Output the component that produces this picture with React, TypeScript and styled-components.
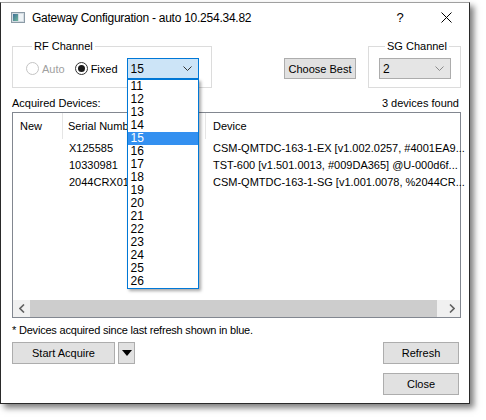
import React from 'react';
import styled, { createGlobalStyle } from 'styled-components';

const GlobalStyle = createGlobalStyle`
  html, body {
    margin: 0;
    padding: 0;
    background: #fff;
  }
  body {
    font-family: 'Liberation Sans', Arial, sans-serif;
    font-size: 11px;
    color: #000;
  }
`;

const Stage = styled.div`
  width: 486px;
  height: 420px;
  padding-top: 2px;
  box-sizing: border-box;
`;

const Window = styled.div`
  width: 470px;
  height: 402px;
  box-sizing: border-box;
  border: 1px solid #2a2a2a;
  border-top-color: #a0a0a0;
  background: #fff;
  box-shadow: 4px 4px 6px rgba(0, 0, 0, 0.5);
  display: flex;
  flex-direction: column;
`;

const TitleBar = styled.div`
  height: 29px;
  display: flex;
  align-items: center;
  padding-left: 10px;
`;

const TitleText = styled.div`
  margin-left: 7px;
  font-size: 12px;
  letter-spacing: -0.25px;
  flex: 1;
`;

const CaptionButton = styled.div`
  width: 46px;
  height: 29px;
  display: flex;
  align-items: center;
  justify-content: center;
  font-size: 13px;
`;

const Content = styled.div`
  flex: 1;
  padding: 0 8px 0 11px;
  display: flex;
  flex-direction: column;
`;

const TopRow = styled.div`
  display: flex;
  align-items: flex-start;
  margin-top: 8px;
`;

const GroupBox = styled.fieldset<{ $width: number; $pl: number }>`
  margin: 0;
  width: ${(p) => p.$width}px;
  min-width: 0;
  box-sizing: border-box;
  padding: 5px 0 8px ${(p) => p.$pl}px;
  border: 1px solid #dcdcdc;
`;

const Legend = styled.legend`
  margin-left: 6px;
  padding: 0 2px;
  line-height: 13px;
  font-size: 11px;
`;

const GroupInner = styled.div`
  display: flex;
  align-items: center;
  height: 21px;
`;

const Radio = styled.div<{ $disabled?: boolean; $mr?: number }>`
  display: flex;
  align-items: center;
  gap: 3px;
  margin-right: ${(p) => p.$mr ?? 0}px;
  color: ${(p) => (p.$disabled ? '#a0a0a0' : '#000')};
`;

const RadioCircle = styled.span<{ $disabled?: boolean }>`
  width: 13px;
  height: 13px;
  box-sizing: border-box;
  border-radius: 50%;
  border: 1px solid ${(p) => (p.$disabled ? '#c4c4c4' : '#333')};
  background: #fff;
  display: flex;
  align-items: center;
  justify-content: center;
`;

const RadioDot = styled.span`
  width: 7px;
  height: 7px;
  border-radius: 50%;
  background: #1a1a1a;
`;

const ComboWrap = styled.div<{ $ml: number }>`
  position: relative;
  margin-left: ${(p) => p.$ml}px;
`;

const Combo = styled.div<{ $focused?: boolean }>`
  width: 72px;
  height: 21px;
  box-sizing: border-box;
  border: 1px solid ${(p) => (p.$focused ? '#0078d7' : '#acacac')};
  background: ${(p) => (p.$focused ? '#cce4f7' : '#e5e5e5')};
  display: flex;
  align-items: center;
  justify-content: space-between;
  padding: 0 6px 0 3px;
  font-size: 12px;
`;

const DropList = styled.div`
  position: absolute;
  top: 100%;
  left: 0;
  width: 72px;
  box-sizing: border-box;
  border: 1px solid #0078d7;
  background: #fff;
  z-index: 10;
  box-shadow: 2px 2px 3px rgba(0, 0, 0, 0.35);
`;

const Option = styled.div<{ $active?: boolean }>`
  height: 13px;
  line-height: 13px;
  font-size: 12px;
  padding-left: 3px;
  background: ${(p) => (p.$active ? '#3390f0' : 'transparent')};
  color: ${(p) => (p.$active ? '#fff' : '#000')};
`;

const Button = styled.button<{ $w: number; $h?: number }>`
  width: ${(p) => p.$w}px;
  height: ${(p) => p.$h ?? 22}px;
  box-sizing: border-box;
  padding: 0;
  border: 1px solid #adadad;
  background: #e1e1e1;
  font-family: 'Liberation Sans', Arial, sans-serif;
  font-size: 11px;
  color: #000;
  display: flex;
  align-items: center;
  justify-content: center;
`;

const ChooseBest = styled(Button)`
  margin: 18px 12px 0 auto;
`;

const InfoRow = styled.div`
  display: flex;
  justify-content: space-between;
  margin-top: 9px;
  line-height: 13px;
  padding-right: 2px;
`;

const ListView = styled.div`
  margin-top: 2px;
  height: 206px;
  box-sizing: border-box;
  border: 1px solid #828790;
  display: flex;
  flex-direction: column;
`;

const GridRow = styled.div<{ $h: number }>`
  display: grid;
  grid-template-columns: 50px 143px 1fr;
  height: ${(p) => p.$h}px;
  align-items: stretch;
  white-space: nowrap;
`;

const HeaderCell = styled.div<{ $pl: number; $last?: boolean }>`
  display: flex;
  align-items: center;
  padding-left: ${(p) => p.$pl}px;
  border-right: ${(p) => (p.$last ? 'none' : '1px solid #e5e5e5')};
`;

const Cell = styled.div<{ $pl: number }>`
  display: flex;
  align-items: center;
  padding-left: ${(p) => p.$pl}px;
`;

const Rows = styled.div`
  flex: 1;
`;

const ScrollBar = styled.div`
  height: 17px;
  display: flex;
  background: #f0f0f0;
`;

const ScrollArrow = styled.div`
  width: 17px;
  display: flex;
  align-items: center;
  justify-content: center;
`;

const Track = styled.div`
  flex: 1;
  display: flex;
`;

const Thumb = styled.div`
  flex: 1;
  margin-right: 6px;
  background: #cdcdcd;
`;

const Note = styled.div`
  margin-top: 6px;
  line-height: 13px;
  letter-spacing: -0.2px;
`;

const ButtonRow = styled.div<{ $mt: number }>`
  display: flex;
  align-items: center;
  margin-top: ${(p) => p.$mt}px;
  padding-right: 2px;
  gap: 3px;
`;

const Spacer = styled.div`
  flex: 1;
`;

const Chevron = ({ color }: { color: string }) => (
  <svg width="9" height="5" viewBox="0 0 9 5">
    <polyline points="0.5,0.5 4.5,4.5 8.5,0.5" fill="none" stroke={color} strokeWidth="1" />
  </svg>
);

const ScrollChevron = ({ dir }: { dir: 'left' | 'right' }) => (
  <svg width="6" height="9" viewBox="0 0 6 9">
    <polyline
      points={dir === 'left' ? '5,0.5 1,4.5 5,8.5' : '1,0.5 5,4.5 1,8.5'}
      fill="none"
      stroke="#606060"
      strokeWidth="1.6"
    />
  </svg>
);

const AppIcon = () => (
  <svg width="14" height="11" viewBox="0 0 14 11">
    <defs>
      <linearGradient id="ig" x1="0" y1="0" x2="1" y2="1">
        <stop offset="0" stopColor="#3f6f98" />
        <stop offset="1" stopColor="#6fb79a" />
      </linearGradient>
    </defs>
    <rect x="0.5" y="0.5" width="13" height="10" fill="#d3dce2" stroke="#8c9ba6" />
    <rect x="2" y="2" width="5" height="7" fill="url(#ig)" />
    <rect x="8" y="2" width="4" height="7" fill="#eef3f6" />
  </svg>
);

const channels = [11, 12, 13, 14, 15, 16, 17, 18, 19, 20, 21, 22, 23, 24, 25, 26];

const devices = [
  { serial: 'X125585', device: 'CSM-QMTDC-163-1-EX [v1.002.0257, #4001EA9...' },
  { serial: '10330981', device: 'TST-600 [v1.501.0013, #009DA365] @U-000d6f...' },
  { serial: '2044CRX01', device: 'CSM-QMTDC-163-1-SG [v1.001.0078, %2044CR...' },
];

const App = () => {
  return (
    <>
      <GlobalStyle />
      <Stage>
        <Window>
          <TitleBar>
            <AppIcon />
            <TitleText>Gateway Configuration - auto 10.254.34.82</TitleText>
            <CaptionButton>?</CaptionButton>
            <CaptionButton>
              <svg width="11" height="11" viewBox="0 0 11 11">
                <path d="M0.5,0.5 L10.5,10.5 M10.5,0.5 L0.5,10.5" stroke="#000" strokeWidth="1" />
              </svg>
            </CaptionButton>
          </TitleBar>
          <Content>
            <TopRow>
              <GroupBox $width={200} $pl={13}>
                <Legend>RF Channel</Legend>
                <GroupInner>
                  <Radio $disabled $mr={10}>
                    <RadioCircle $disabled />
                    Auto
                  </Radio>
                  <Radio>
                    <RadioCircle>
                      <RadioDot />
                    </RadioCircle>
                    Fixed
                  </Radio>
                  <ComboWrap $ml={9}>
                    <Combo $focused>
                      15
                      <Chevron color="#333" />
                    </Combo>
                    <DropList>
                      {channels.map((c) => (
                        <Option key={c} $active={c === 15}>
                          {c}
                        </Option>
                      ))}
                    </DropList>
                  </ComboWrap>
                </GroupInner>
              </GroupBox>
              <ChooseBest $w={72} $h={21}>
                Choose Best
              </ChooseBest>
              <GroupBox $width={93} $pl={10}>
                <Legend>SG Channel</Legend>
                <GroupInner>
                  <ComboWrap $ml={0}>
                    <Combo>
                      2
                      <Chevron color="#8a8a8a" />
                    </Combo>
                  </ComboWrap>
                </GroupInner>
              </GroupBox>
            </TopRow>
            <InfoRow>
              <span>Acquired Devices:</span>
              <span>3 devices found</span>
            </InfoRow>
            <ListView>
              <GridRow $h={26}>
                <HeaderCell $pl={7}>New</HeaderCell>
                <HeaderCell $pl={5}>Serial Number</HeaderCell>
                <HeaderCell $pl={7} $last>
                  Device
                </HeaderCell>
              </GridRow>
              <Rows>
                {devices.map((d) => (
                  <GridRow $h={17} key={d.serial}>
                    <Cell $pl={7} />
                    <Cell $pl={6}>{d.serial}</Cell>
                    <Cell $pl={7}>{d.device}</Cell>
                  </GridRow>
                ))}
              </Rows>
              <ScrollBar>
                <ScrollArrow>
                  <ScrollChevron dir="left" />
                </ScrollArrow>
                <Track>
                  <Thumb />
                </Track>
                <ScrollArrow>
                  <ScrollChevron dir="right" />
                </ScrollArrow>
              </ScrollBar>
            </ListView>
            <Note>* Devices acquired since last refresh shown in blue.</Note>
            <ButtonRow $mt={5}>
              <Button $w={103}>Start Acquire</Button>
              <Button $w={17}>
                <svg width="10" height="6" viewBox="0 0 10 6">
                  <polygon points="0,0 10,0 5,6" fill="#000" />
                </svg>
              </Button>
              <Spacer />
              <Button $w={76}>Refresh</Button>
            </ButtonRow>
            <ButtonRow $mt={9}>
              <Spacer />
              <Button $w={76}>Close</Button>
            </ButtonRow>
          </Content>
        </Window>
      </Stage>
    </>
  );
};

export default App;
